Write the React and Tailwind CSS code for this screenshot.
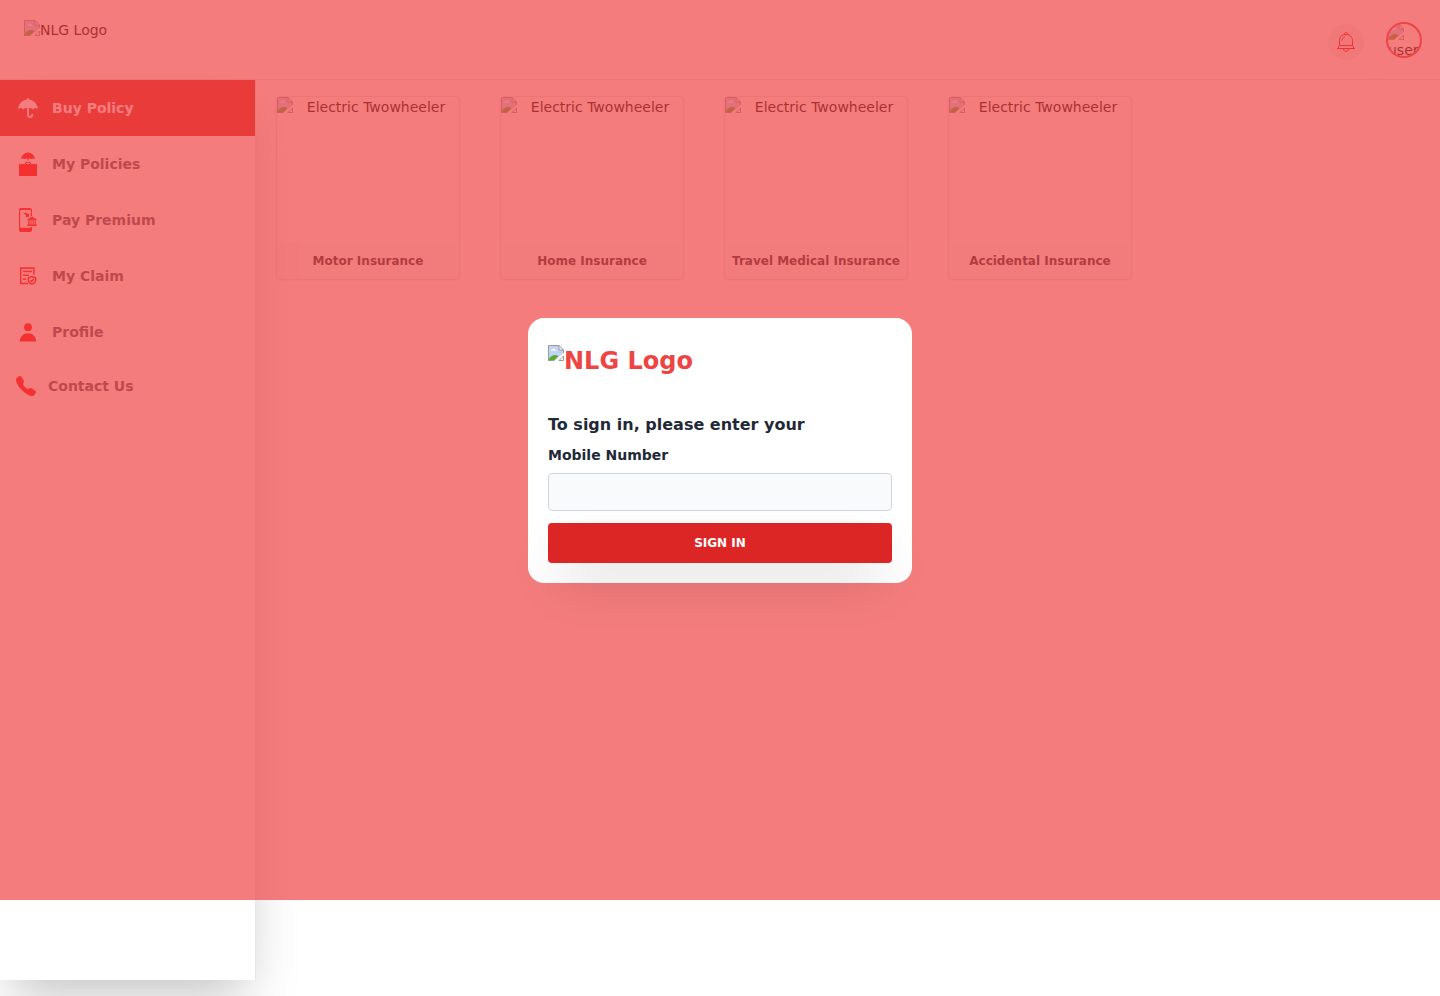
import React from "react";
import { IoCall } from "react-icons/io5";

function BrokenImage() {
  return (
    <svg className="size-4 shrink-0" viewBox="0 0 16 16" aria-hidden="true">
      <path d="M1 1h10l4 4v4L8 15H1z" fill="#c3d3f5" />
      <path d="M3 5.500c0-1 1-1.300 1.600-1C5 3.300 6.800 3.300 7 4.500c.9 0 1.300.5 1.300 1.300H3z" fill="#fff" />
      <path d="M1 15v-1.500C3 11.500 4.500 10 7 10c1.500 0 2.700.6 3.500 1.300L6.500 15z" fill="#5aac35" />
      <path d="M7 15.500 16 7.500v3L10.500 15.500z" fill="#fff" />
      <path d="M11 1v4h4z" fill="#fff" />
      <path d="M.5 16V.5h10.700L15.500 5v3M11 .5V5h4.500M0 15.500h6.500M11 15.500h4.500V11z" fill="none" stroke="#9a9a9a" />
    </svg>
  );
}

function UmbrellaIcon() {
  return (
    <svg className="size-5" viewBox="0 0 20 20" fill="currentColor" aria-hidden="true">
      <path d="M10 0c.6 0 .9.400.9.900v.7C15.500 2 19.300 5.600 20 11.200c-1.700-1.500-3.800-1.500-5.200.2-1.200-1-2.400-1.500-3.900-1.200h-1.800c-1.500-.3-2.700.2-3.900 1.200C3.800 9.700 1.700 9.700 0 11.200.7 5.600 4.500 2 9.100 1.600V.9C9.100.4 9.400 0 10 0z" />
      <path d="M10 9.500v7.600c0 2.500 4.300 2.500 4.300-.3" fill="none" stroke="currentColor" strokeWidth="1.900" strokeLinecap="round" />
    </svg>
  );
}

function PoliciesIcon() {
  return (
    <svg className="size-6" viewBox="0 0 24 24" fill="currentColor" aria-hidden="true">
      <path d="M12 0c.4 0 .6.300.6.700C16 1 18.500 3.500 19 7c-1.300-.8-2.500-.7-3.500.2-1-.8-2-.9-2.900-.4V8.500h-1.200V6.800c-.9-.5-1.900-.4-2.900.4C7.500 6.300 6.300 6.200 5 7c.5-3.500 3-6 6.400-6.300 0-.4.2-.7.6-.7z" />
      <path d="M3 12h18v12H3z" />
      <path d="M9.500 12v-1.500h5V12" fill="none" stroke="currentColor" />
    </svg>
  );
}

function PremiumIcon() {
  return (
    <svg className="size-6" viewBox="0 0 24 24" fill="currentColor" aria-hidden="true">
      <path fillRule="evenodd" d="M5.500 0h8C15 0 16 .9 16 2.300V8h-1.200V2H4.200v17.800h10.600V19H16v2.700c0 1.400-1 2.300-2.500 2.300h-8C4 24 3 23.100 3 21.700V2.300C3 .9 4 0 5.500 0z" />
      <path d="M6.500 4.800c2.400-.2 4.300.1 5.800 1.200l.8-.7-.1 3.700H9.300l.9-.9C9.400 6.500 8.200 5.500 6.500 4.800z" />
      <path d="m16 8.500 4.700 3v1h-9.400v-1zM12.200 13h1.300v3.500h-1.300zM14.500 13h1v3.500h-1zM16.600 13h1v3.500h-1zM18.600 13h1.200v3.500h-1.200zM11.300 16.600h9.400V18h-9.400z" />
    </svg>
  );
}

function ClaimIcon() {
  return (
    <svg className="size-6" viewBox="0 0 24 24" fill="none" stroke="currentColor" strokeWidth="1.500" aria-hidden="true">
      <path d="M12 19.500H4.700V4h13.200v6.500" />
      <path d="M7 7.500h9M7 11.300h6M7 15.300h3" />
      <path d="m16 12.500 3.600 1.200v2.700c0 1.900-1.600 3-3.600 3.700-2-.7-3.600-1.800-3.600-3.700v-2.700z" />
      <path d="m14.400 16.200 1.300 1.200 2.200-2.400" />
    </svg>
  );
}

function ProfileIcon() {
  return (
    <svg className="size-6" viewBox="0 0 24 24" fill="currentColor" aria-hidden="true">
      <circle cx="12" cy="7.200" r="3.900" />
      <path d="M3.700 21.500c.5-4.800 3.600-8.300 8.300-8.300s7.800 3.500 8.300 8.300z" />
    </svg>
  );
}

function BellIcon() {
  return (
    <svg className="size-5" viewBox="0 0 20 20" fill="none" stroke="#ff0000" aria-hidden="true">
      <path d="M3.500 13.500V8.500C3.500 5 6.200 2.500 10 2.500s6.500 2.500 6.500 6v5l1.500 3H2z" />
      <path d="M1 16.500h18M3.500 13.500h13M8.200 2.600C8.200 1.200 8.900.6 10 .6s1.800.6 1.800 2M7.500 17c.2 1.500 1.200 2.300 2.500 2.300s2.300-.8 2.500-2.300M5.800 8.700c0-2 1.200-3.300 3-3.700" />
    </svg>
  );
}

const menu = [
  { label: "My Policies", Icon: PoliciesIcon },
  { label: "Pay Premium", Icon: PremiumIcon },
  { label: "My Claim", Icon: ClaimIcon },
  { label: "Profile", Icon: ProfileIcon },
];

const products = ["Motor Insurance", "Home Insurance", "Travel Medical Insurance", "Accidental Insurance"];

const row = "flex items-center gap-3 p-4";

export default function App() {
  return (
    <div className="relative flex min-h-screen flex-col overflow-hidden bg-white font-['DejaVu_Sans',sans-serif] text-sm text-black">
      <header className="flex h-20 items-start justify-between border-b border-[#e5e7eb] px-6 pt-5">
        <a href="#" className="flex items-start">
          <BrokenImage />
          <span>NLG Logo</span>
        </a>
        <div className="-mr-1.5 flex items-start gap-[22px]">
          <button type="button" aria-label="Notifications" className="mt-1 flex size-9 items-center justify-center rounded-full bg-[#f0f1f3] shadow-2xl">
            <BellIcon />
          </button>
          <button type="button" className="mt-0.5 size-9 overflow-hidden rounded-full border-2 border-[#ef4444] text-left shadow-2xl">
            <BrokenImage />
            <span className="block leading-5">user</span>
          </button>
        </div>
      </header>

      <div className="flex">
        <aside className="z-10 h-[900px] w-64 shrink-0 border-r border-[#e5e7eb] bg-white shadow-2xl">
          <nav className="flex flex-col font-bold text-[#4b5563]">
            <a href="#" className={`${row} bg-[#dc2626] text-white`}>
              <span className="flex size-6 items-center justify-center">
                <UmbrellaIcon />
              </span>
              Buy Policy
            </a>
            {menu.map(({ label, Icon }) => (
              <a key={label} href="#" className={row}>
                <span className="text-[#ff0000]">
                  <Icon />
                </span>
                {label}
              </a>
            ))}
            <a href="#" className={row}>
              <IoCall className="size-5 text-[#ff0000]" viewBox="32 32 448 448" />
              Contact Us
            </a>
          </nav>
        </aside>

        <main className="flex flex-1 flex-wrap content-start gap-10 px-5 pt-4">
          {products.map((name) => (
            <a key={name} href="#" className="flex size-46 flex-col overflow-hidden rounded-sm border border-[#e5e7eb] bg-white shadow-xs">
              <span className="flex flex-1 items-start">
                <BrokenImage />
                <span className="flex-1 text-center">Electric Twowheeler</span>
              </span>
              <span className="h-9 bg-[#f9fafb] pt-2.5 text-center text-xs font-bold whitespace-nowrap text-[#1f2937]">{name}</span>
            </a>
          ))}
        </main>
      </div>

      <div className="absolute inset-x-0 top-0 z-20 flex h-[900px] items-center justify-center bg-[#ef4444]/70">
        <div role="dialog" aria-modal="true" aria-label="Sign in" className="w-96 rounded-2xl bg-white p-5 text-[#1f2937]">
          <div className="flex h-[75px] items-start pt-[7px] text-2xl font-bold text-[#ef4444]">
            <BrokenImage />
            <span>NLG Logo</span>
          </div>
          <form onSubmit={(e) => e.preventDefault()}>
            <h1 className="mb-2 text-base font-bold">To sign in, please enter your</h1>
            <label htmlFor="mobile" className="mb-2 block text-sm font-bold">
              Mobile Number
            </label>
            <input id="mobile" type="tel" className="mb-3 block h-[38px] w-full rounded-sm border border-[#d1d5db] bg-[#f9fafb] px-3 text-sm" />
            <button type="submit" className="h-10 w-full rounded-sm bg-[#dc2626] text-xs font-bold text-white shadow-2xl">
              SIGN IN
            </button>
          </form>
        </div>
      </div>
    </div>
  );
}
